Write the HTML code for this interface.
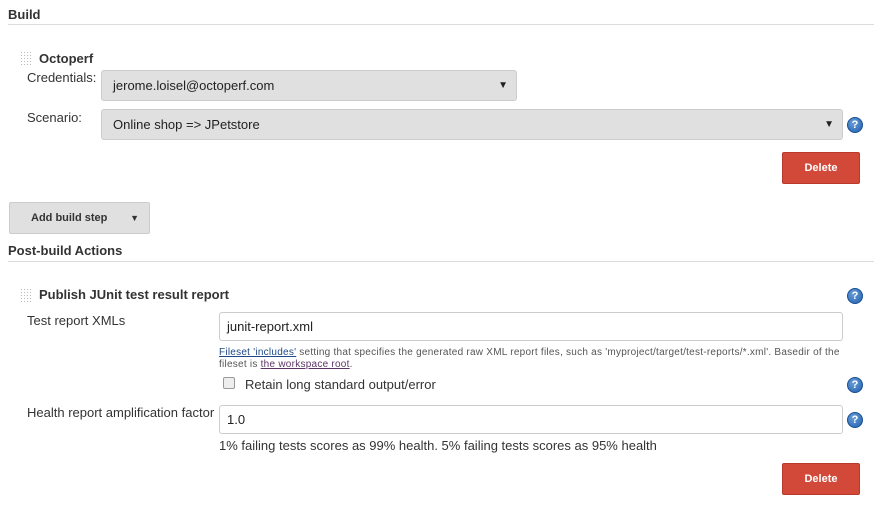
<!DOCTYPE html>
<html><head><style>
body{margin:0;width:879px;height:505px;background:#fff;font-family:"Liberation Sans",sans-serif;font-size:13px;color:#333;position:relative;overflow:hidden}
.a{position:absolute}
.h{font-weight:bold;font-size:13px;color:#333}
.hr{height:1px;background:#ddd}
.grip{width:12px;height:14px;background-image:radial-gradient(#bbb 0.7px,transparent 0.8px);background-size:3px 3px}
.sel{background:#e0e0e0;border:1px solid #ccc;border-radius:3px;box-sizing:border-box;padding-left:11px;font-size:13px;color:#222}
.sel .arr{position:absolute;right:8px;top:0;font-size:10px}
.inp{border:1px solid #ccc;border-radius:3px;box-sizing:border-box;padding-left:7px;font-size:13px;color:#222;background:#fff}
.del{background:#d24939;border:1px solid #b73a2c;border-radius:2px;color:#fff;font-weight:bold;font-size:11px;text-align:center;box-sizing:border-box;line-height:31px}
.q{width:16px;height:16px;border-radius:50%;background:radial-gradient(circle at 40% 35%,#6a9fd8,#1f5fae);border:1px solid #1a4f94;box-sizing:border-box;color:#fff;font-weight:bold;font-size:11px;text-align:center;line-height:14px}
a{color:#204a87}
</style></head><body>
<div class="a h" style="left:8px;top:7px">Build</div>
<div class="a hr" style="left:8px;top:24px;width:866px"></div>
<div class="a grip" style="left:20px;top:51px"></div>
<div class="a h" style="left:39px;top:51px">Octoperf</div>
<div class="a" style="left:27px;top:70px">Credentials:</div>
<div class="a sel" style="left:101px;top:70px;width:416px;height:31px;line-height:29px">jerome.loisel@octoperf.com<span class="arr">▼</span></div>
<div class="a" style="left:27px;top:110px">Scenario:</div>
<div class="a sel" style="left:101px;top:109px;width:742px;height:31px;line-height:29px">Online shop =&gt; JPetstore<span class="arr">▼</span></div>
<div class="a q" style="left:847px;top:117px">?</div>
<div class="a del" style="left:782px;top:152px;width:78px;height:32px">Delete</div>
<div class="a" style="left:9px;top:202px;width:141px;height:32px;background:#e0e0e0;border:1px solid #ccc;border-radius:2px;box-sizing:border-box;font-weight:bold;font-size:11px;color:#333;line-height:31px;padding-left:21px">Add build step<span style="position:absolute;right:10px;font-size:9px">▼</span></div>
<div class="a h" style="left:8px;top:243px">Post-build Actions</div>
<div class="a hr" style="left:8px;top:261px;width:866px"></div>
<div class="a grip" style="left:20px;top:288px"></div>
<div class="a h" style="left:39px;top:287px">Publish JUnit test result report</div>
<div class="a q" style="left:847px;top:288px">?</div>
<div class="a" style="left:27px;top:313px">Test report XMLs</div>
<div class="a inp" style="left:219px;top:312px;width:624px;height:29px;line-height:27px">junit-report.xml</div>
<div class="a" style="left:219px;top:347px;font-size:10px;line-height:12px;color:#555;white-space:nowrap;letter-spacing:0.25px"><a href="#" style="color:#204a87">Fileset 'includes'</a> setting that specifies the generated raw XML report files, such as 'myproject/target/test-reports/*.xml'. Basedir of the<br>fileset is <a href="#" style="color:#5c3566">the workspace root</a>.</div>
<div class="a" style="left:223px;top:377px;width:12px;height:12px;border:1px solid #999;border-radius:2px;background:#eee;box-sizing:border-box"></div>
<div class="a" style="left:245px;top:377px">Retain long standard output/error</div>
<div class="a q" style="left:847px;top:377px">?</div>
<div class="a" style="left:27px;top:405px">Health report amplification factor</div>
<div class="a inp" style="left:219px;top:405px;width:624px;height:29px;line-height:27px">1.0</div>
<div class="a q" style="left:847px;top:412px">?</div>
<div class="a" style="left:219px;top:438px">1% failing tests scores as 99% health. 5% failing tests scores as 95% health</div>
<div class="a del" style="left:782px;top:463px;width:78px;height:32px">Delete</div>
</body></html>
